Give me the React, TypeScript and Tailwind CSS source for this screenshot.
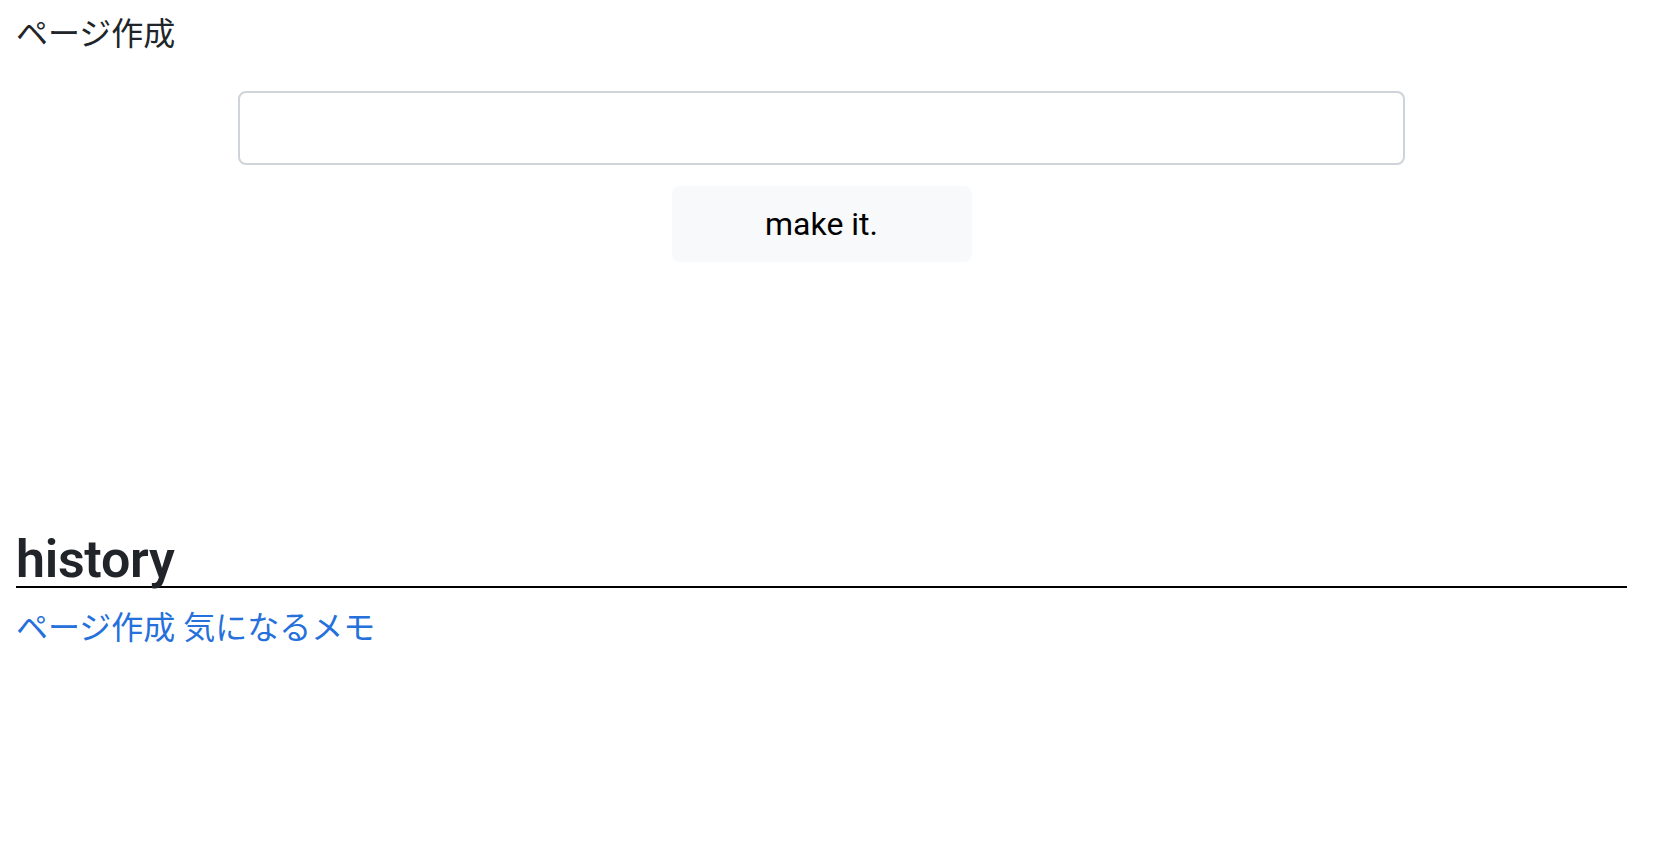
const FONT = 'font-["Roboto","Noto_Sans_CJK_JP",sans-serif]';

export default function App() {
  return (
    <div className={`${FONT} min-h-screen bg-white pl-4 pr-[47px] text-[#212529]`}>
      <div className="pt-[10px] text-[32px] leading-[48px]">ページ作成</div>

      <form className="mt-[33px] flex flex-col items-center gap-[21px]" onSubmit={(e) => e.preventDefault()}>
        <input
          type="text"
          className="h-[74px] w-[1167px] rounded-[8px] border-2 border-[#ced4da] bg-white px-6 text-[32px] outline-none"
        />
        <button
          type="submit"
          className="h-[76px] w-[300px] rounded-[8px] bg-[#f8f9fa] text-[32px] leading-[48px] text-black"
        >
          make it.
        </button>
      </form>

      <h2 className="mt-[272px] border-b-2 border-black text-[52px] leading-[52px] font-semibold tracking-[-0.3px]">
        history
      </h2>

      <div className="mt-[16px] text-[32px] leading-[48px]">
        <a href="#" className="text-[#2670dc]">ページ作成</a>{' '}
        <a href="#" className="text-[#2670dc]">気になるメモ</a>
      </div>
    </div>
  );
}
